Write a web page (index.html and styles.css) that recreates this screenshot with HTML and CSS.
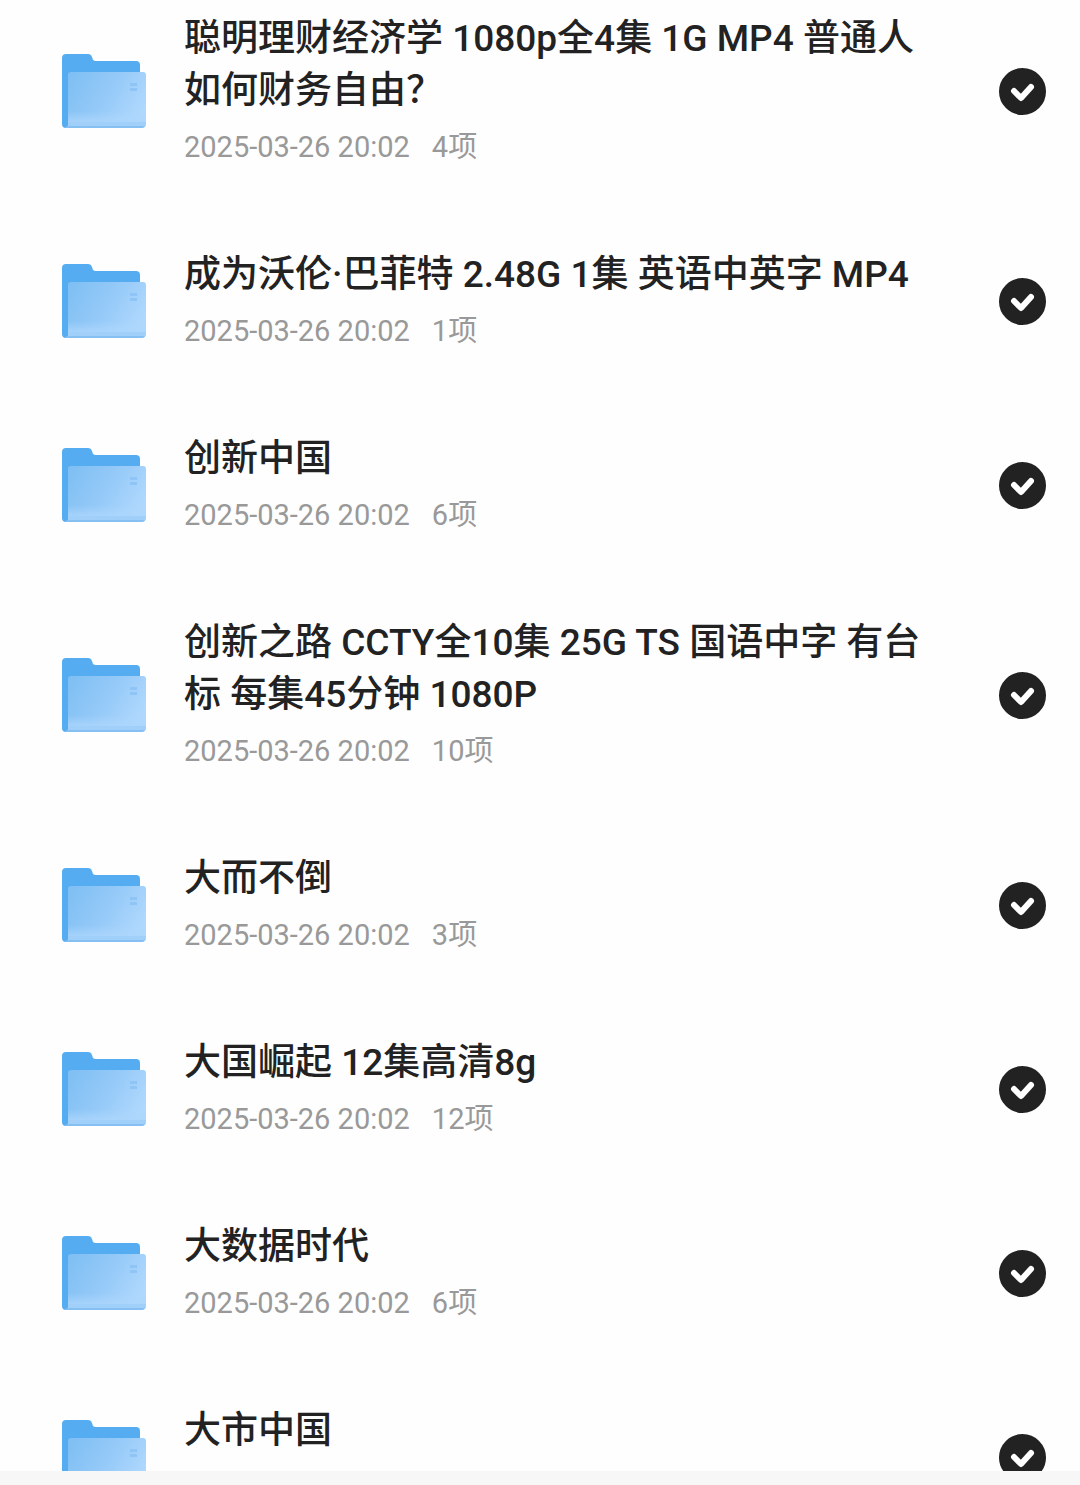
FILE: index.html
```
<!DOCTYPE html>
<html lang="zh-CN">
<head>
  <meta charset="UTF-8" />
  <meta name="viewport" content="width=device-width, initial-scale=1" />
  <title>文件列表</title>
  <link rel="stylesheet" href="styles.css">
</head>
<body>
  <svg class="defs" aria-hidden="true">
    <defs>
      <linearGradient id="front" x1="0" y1="0.2" x2="1" y2="0.6">
        <stop offset="0" stop-color="#7fbff3" />
        <stop offset="0.5" stop-color="#94c9f8" />
        <stop offset="1" stop-color="#b0d8fd" />
      </linearGradient>
      <linearGradient id="shine" x1="0" y1="0" x2="0" y2="1">
        <stop offset="0" stop-color="#acd6fc" stop-opacity="0" />
        <stop offset="1" stop-color="#acd6fc" stop-opacity="0.8" />
      </linearGradient>
    </defs>
    <symbol id="folder" viewBox="0 0 84 74">
      <path fill="#55acf0" d="M4 0h22q3 0 4 3l1 3q1 1 3 1h40q4 0 4 4v50H6v13H4q-4 0-4-4V4q0-4 4-4z" />
      <path fill="url(#front)" d="M9 18h72q3 0 3 3v49q0 4-4 4H3q3 0 3-4V21q0-3 3-3z" />
      <path fill="url(#shine)" d="M6 57h78v11H6z" />
      <path fill="#a0d0fa" d="M6 68h78v2q0 1-1 2H6z" />
      <path fill="#86c0f2" d="M5 72h78q-1 2-3 2H3z" />
      <path fill="#8ec5f6" d="M68 29h7v3h-7zM68 34h7v3h-7z" />
    </symbol>
    <symbol id="tick" viewBox="0 0 47 47">
      <path fill="none" stroke="#fff" stroke-width="6" stroke-linecap="round" stroke-linejoin="round" d="M15 23l7 7 10-11" />
    </symbol>
  </svg>

  <main>
    <ul class="list">
      <li class="item">
        <svg class="folder"><use href="#folder" /></svg>
        <label class="info" for="f1">
          <span class="name">聪明理财经济学 1080p全4集 1G MP4 普通人如何财务自由？</span>
          <span class="meta"><span>2025-03-26 20:02</span><span>4项</span></span>
        </label>
        <span class="check"><input type="checkbox" id="f1" checked><svg><use href="#tick" /></svg></span>
      </li>
      <li class="item">
        <svg class="folder"><use href="#folder" /></svg>
        <label class="info" for="f2">
          <span class="name">成为沃伦·巴菲特 2.48G 1集 英语中英字 MP4</span>
          <span class="meta"><span>2025-03-26 20:02</span><span>1项</span></span>
        </label>
        <span class="check"><input type="checkbox" id="f2" checked><svg><use href="#tick" /></svg></span>
      </li>
      <li class="item">
        <svg class="folder"><use href="#folder" /></svg>
        <label class="info" for="f3">
          <span class="name">创新中国</span>
          <span class="meta"><span>2025-03-26 20:02</span><span>6项</span></span>
        </label>
        <span class="check"><input type="checkbox" id="f3" checked><svg><use href="#tick" /></svg></span>
      </li>
      <li class="item">
        <svg class="folder"><use href="#folder" /></svg>
        <label class="info" for="f4">
          <span class="name">创新之路 CCTY全10集 25G TS 国语中字 有台标 每集45分钟 1080P</span>
          <span class="meta"><span>2025-03-26 20:02</span><span>10项</span></span>
        </label>
        <span class="check"><input type="checkbox" id="f4" checked><svg><use href="#tick" /></svg></span>
      </li>
      <li class="item">
        <svg class="folder"><use href="#folder" /></svg>
        <label class="info" for="f5">
          <span class="name">大而不倒</span>
          <span class="meta"><span>2025-03-26 20:02</span><span>3项</span></span>
        </label>
        <span class="check"><input type="checkbox" id="f5" checked><svg><use href="#tick" /></svg></span>
      </li>
      <li class="item">
        <svg class="folder"><use href="#folder" /></svg>
        <label class="info" for="f6">
          <span class="name">大国崛起 12集高清8g</span>
          <span class="meta"><span>2025-03-26 20:02</span><span>12项</span></span>
        </label>
        <span class="check"><input type="checkbox" id="f6" checked><svg><use href="#tick" /></svg></span>
      </li>
      <li class="item">
        <svg class="folder"><use href="#folder" /></svg>
        <label class="info" for="f7">
          <span class="name">大数据时代</span>
          <span class="meta"><span>2025-03-26 20:02</span><span>6项</span></span>
        </label>
        <span class="check"><input type="checkbox" id="f7" checked><svg><use href="#tick" /></svg></span>
      </li>
      <li class="item">
        <svg class="folder"><use href="#folder" /></svg>
        <label class="info" for="f8">
          <span class="name">大市中国</span>
          <span class="meta"></span>
        </label>
        <span class="check"><input type="checkbox" id="f8" checked><svg><use href="#tick" /></svg></span>
      </li>
    </ul>
  </main>
  <footer></footer>
</body>
</html>
```
FILE: styles.css
```
* {
  box-sizing: border-box;
}
body {
  font-family: Roboto, "Noto Sans CJK SC", sans-serif;
  background: #fefefe;
  color: #222;
  display: flex;
  flex-direction: column;
  height: 100vh;
  margin: 0;
}
.defs {
  position: absolute;
  width: 0;
  height: 0;
}
main {
  flex: 1;
  min-height: 0;
  overflow: hidden;
}
/* list is scrolled a little past the first row's top padding */
.list {
  list-style: none;
  margin: -27px 0 0;
  padding: 0;
}
.item {
  display: flex;
  align-items: center;
  padding: 40px 34px 40px 62px;
}
.folder {
  flex: none;
  width: 84px;
  height: 74px;
}
.info {
  flex: 1;
  display: flex;
  flex-direction: column;
  gap: 8px;
  margin: 0 54px 0 38px;
}
.name {
  font-size: 37px;
  font-weight: 500;
  line-height: 52px;
}
.meta {
  display: flex;
  gap: 22px;
  min-height: 44px;
  font-size: 29px;
  line-height: 44px;
  color: #999;
}
.check {
  flex: none;
  display: grid;
  width: 47px;
  height: 47px;
}
.check input,
.check svg {
  grid-area: 1 / 1;
  width: 100%;
  height: 100%;
  margin: 0;
}
.check input {
  appearance: none;
  border: 2px solid #ccc;
  border-radius: 50%;
  cursor: pointer;
}
.check input:checked {
  background: #222;
  border-color: #222;
}
.check svg {
  pointer-events: none;
}
footer {
  flex: none;
  height: 14px;
  background: #f7f7f7;
}
```
